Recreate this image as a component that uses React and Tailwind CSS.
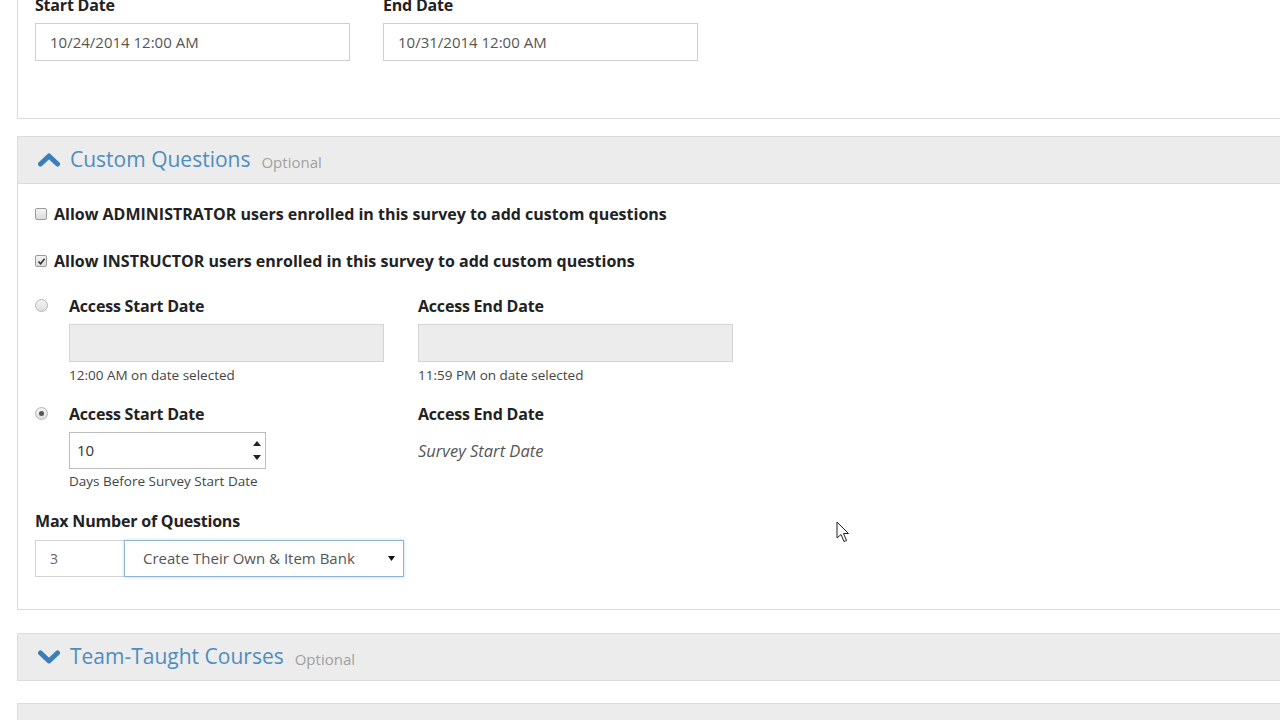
import React from "react";

const font = { fontFamily: '"Open Sans", "Noto Sans", Arial, sans-serif' };

function ChevronUp() {
  return (
    <svg width="22" height="14" viewBox="0 0 22 14">
      <path d="M2.5 11 L11 3 L19.5 11" fill="none" stroke="#3a7fba" strokeWidth="5" strokeLinecap="round" strokeLinejoin="round" />
    </svg>
  );
}
function ChevronDown() {
  return (
    <svg width="22" height="14" viewBox="0 0 22 14">
      <path d="M2.5 3 L11 11 L19.5 3" fill="none" stroke="#3a7fba" strokeWidth="5" strokeLinecap="round" strokeLinejoin="round" />
    </svg>
  );
}

function Header({ up, title }) {
  return (
    <div className="flex h-[48px] items-center border border-r-0 border-[#dcdcdc] bg-[#ececec] pl-[20px]">
      <div className="mr-[10px] flex items-center">{up ? <ChevronUp /> : <ChevronDown />}</div>
      <span className="text-[21px] text-[#4f8cc0]">{title}</span>
      <span className="ml-[11px] mt-[4px] text-[15px] text-[#a0a0a0]">Optional</span>
    </div>
  );
}

function Checkbox({ checked }) {
  return (
    <span className="flex h-[12px] w-[12px] items-center justify-center rounded-[2px] border border-[#9a9a9a] bg-gradient-to-b from-[#f4f4f4] to-[#dcdcdc]">
      {checked && (
        <svg width="9" height="9" viewBox="0 0 9 9">
          <path d="M1.5 4.5 L3.6 6.8 L7.6 1.8" fill="none" stroke="#333" strokeWidth="1.6" />
        </svg>
      )}
    </span>
  );
}

function Radio({ checked }) {
  return (
    <span className="flex h-[13px] w-[13px] items-center justify-center rounded-full border border-[#b5b5b5] bg-gradient-to-b from-[#f4f4f4] to-[#dedede]">
      {checked && <span className="h-[5px] w-[5px] rounded-full bg-[#555]" />}
    </span>
  );
}

function Cursor() {
  return (
    <svg width="16" height="24" viewBox="0 0 16 24" className="absolute left-[836px] top-[521px]">
      <path d="M1 1 L1 17 L5 13.5 L8 20.5 L10.5 19.5 L7.5 12.5 L12.5 12.5 Z" fill="#fff" stroke="#222" strokeWidth="1" strokeLinejoin="round" />
    </svg>
  );
}

const label = "text-[16px] font-bold leading-[20px] text-[#222] tracking-[-0.2px]";
const cbLabel = "text-[16px] font-bold leading-[20px] text-[#222]";

export default function App() {
  return (
    <div className="relative h-[720px] w-[1280px] overflow-hidden bg-white text-[#333]" style={font}>
      <div className="pl-[17px]">
        {/* Top panel (continuation) */}
        <div className="-mt-[20px] h-[139px] border-b border-l border-[#dcdcdc] pl-[17px] pt-[15px]">
          <div className="flex gap-[33px]">
            <div>
              <div className={label}>Start Date</div>
              <div className="mt-[8px] flex h-[38px] w-[315px] items-center border border-[#cfcfcf] pl-[14px] text-[15px] text-[#555]">
                10/24/2014 12:00 AM
              </div>
            </div>
            <div>
              <div className={label}>End Date</div>
              <div className="mt-[8px] flex h-[38px] w-[315px] items-center border border-[#cfcfcf] pl-[14px] text-[15px] text-[#555]">
                10/31/2014 12:00 AM
              </div>
            </div>
          </div>
        </div>

        {/* Custom Questions */}
        <div className="mt-[17px]">
          <Header up title="Custom Questions" />
          <div className="h-[426px] border-b border-l border-[#dcdcdc] pl-[17px] pt-[19px]">
            <div className="flex h-[22px] items-center gap-[7px]">
              <Checkbox />
              <span className={cbLabel}>Allow ADMINISTRATOR users enrolled in this survey to add custom questions</span>
            </div>
            <div className="mt-[25px] flex h-[22px] items-center gap-[7px]">
              <Checkbox checked />
              <span className={cbLabel}>Allow INSTRUCTOR users enrolled in this survey to add custom questions</span>
            </div>

            {/* Option 1 */}
            <div className="mt-[24px] flex">
              <div className="w-[34px] pt-[3px]">
                <Radio />
              </div>
              <div className="w-[349px]">
                <div className={label}>Access Start Date</div>
                <div className="mt-[8px] h-[38px] w-[315px] border border-[#d4d4d4] bg-[#ececec]" />
                <div className="mt-[5px] text-[13.5px] leading-[16px] text-[#444]">12:00 AM on date selected</div>
              </div>
              <div>
                <div className={label}>Access End Date</div>
                <div className="mt-[8px] h-[38px] w-[315px] border border-[#d4d4d4] bg-[#ececec]" />
                <div className="mt-[5px] text-[13.5px] leading-[16px] text-[#444]">11:59 PM on date selected</div>
              </div>
            </div>

            {/* Option 2 */}
            <div className="mt-[21px] flex">
              <div className="w-[34px] pt-[3px]">
                <Radio checked />
              </div>
              <div className="w-[349px]">
                <div className={label}>Access Start Date</div>
                <div className="mt-[8px] flex h-[37px] w-[197px] items-center justify-between border border-[#bdbdbd] pl-[7px] pr-[4px] text-[15px] text-[#333]">
                  <span>10</span>
                  <span className="flex flex-col items-center gap-[9px]">
                    <svg width="8" height="5" viewBox="0 0 8 5"><path d="M0 5 L4 0 L8 5Z" fill="#222" /></svg>
                    <svg width="8" height="5" viewBox="0 0 8 5"><path d="M0 0 L4 5 L8 0Z" fill="#222" /></svg>
                  </span>
                </div>
                <div className="mt-[4px] text-[13.5px] leading-[16px] text-[#444]">Days Before Survey Start Date</div>
              </div>
              <div>
                <div className={label}>Access End Date</div>
                <div className="mt-[17px] text-[16.5px] italic leading-[20px] text-[#555]">Survey Start Date</div>
              </div>
            </div>

            {/* Max number */}
            <div className={`mt-[22px] ${label}`}>Max Number of Questions</div>
            <div className="mt-[9px] flex">
              <div className="flex h-[37px] w-[89px] items-center border border-r-0 border-[#d4d4d4] pl-[14px] text-[14px] text-[#666]">3</div>
              <div className="flex h-[37px] w-[280px] items-center justify-between border border-[#8fb4d8] pl-[18px] pr-[8px] text-[15px] text-[#555] shadow-[0_0_3px_rgba(100,150,200,0.4)]">
                <span>Create Their Own &amp; Item Bank</span>
                <svg width="7" height="5" viewBox="0 0 7 5"><path d="M0 0 L3.5 5 L7 0Z" fill="#111" /></svg>
              </div>
            </div>
          </div>
        </div>

        {/* Team-Taught */}
        <div className="mt-[23px]">
          <Header title="Team-Taught Courses" />
        </div>
        <div className="mt-[22px] h-[48px] border border-r-0 border-[#dcdcdc] bg-[#ececec]" />
      </div>
      <Cursor />
    </div>
  );
}
